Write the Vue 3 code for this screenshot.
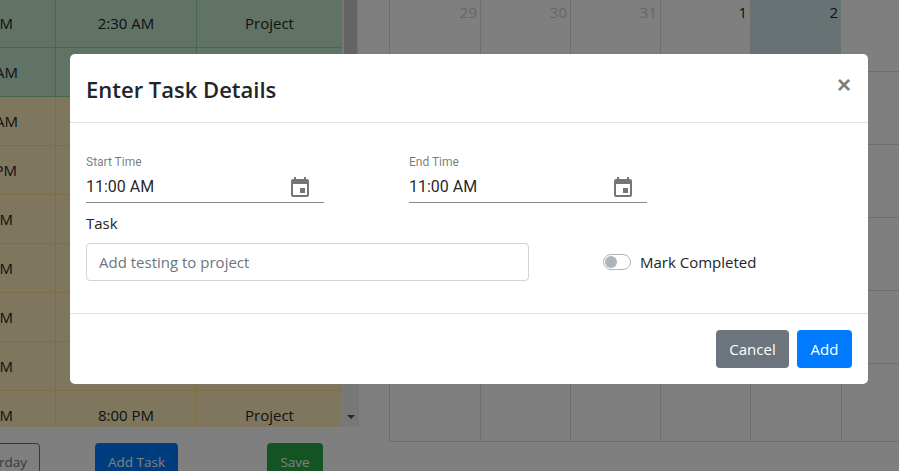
<script setup>
const rows = [
  { t: 'M', s: '2:30 AM', k: 'Project', c: 'green' },
  { t: 'AM', s: '', k: '', c: 'green' },
  { t: 'AM', s: '', k: '', c: 'yellow' },
  { t: 'PM', s: '', k: '', c: 'yellow' },
  { t: 'M', s: '', k: '', c: 'yellow' },
  { t: 'M', s: '', k: '', c: 'yellow' },
  { t: 'M', s: '', k: '', c: 'yellow' },
  { t: 'M', s: '', k: '', c: 'yellow' },
  { t: 'M', s: '8:00 PM', k: 'Project', c: 'yellow' }
]
const weeks = [
  [{ d: '29', m: 1 }, { d: '30', m: 1 }, { d: '31', m: 1 }, { d: '1' }, { d: '2', today: 1 }, { d: '' }],
  ...Array.from({ length: 5 }, () => Array.from({ length: 6 }, () => ({ d: '' })))
]
const iconPath = 'M17 12h-5v5h5v-5zM16 1v2H8V1H6v2H5c-1.11 0-1.99.9-1.99 2L3 19c0 1.1.89 2 2 2h14c1.1 0 2-.9 2-2V5c0-1.1-.9-2-2-2h-1V1h-2zm3 18H5V8h14v11z'
const fields = ['Start Time', 'End Time']
</script>

<template>
  <div class="page">
    <section class="left">
      <div class="scroller">
        <div class="table">
          <div v-for="(r, i) in rows" :key="i" class="row" :class="r.c">
            <div class="cell c1" :class="'t-' + r.t">{{ r.t }}</div>
            <div class="cell c2">{{ r.s }}</div>
            <div class="cell c3">{{ r.k }}</div>
          </div>
        </div>
        <div class="scrollbar">
          <div class="thumb"></div>
          <div class="arrow"></div>
        </div>
      </div>
      <div class="actions">
        <button class="btn outline">rday</button>
        <button class="btn primary dim">Add Task</button>
        <button class="btn success">Save</button>
      </div>
    </section>

    <section class="calendar">
      <div v-for="(w, i) in weeks" :key="i" class="week" :class="'w' + i">
        <div v-for="(c, j) in w" :key="j" class="day" :class="{ muted: c.m, today: c.today }">{{ c.d }}</div>
      </div>
    </section>

    <div class="backdrop"></div>

    <div class="modal">
      <header class="m-head">
        <h5 class="title">Enter Task Details</h5>
        <span class="close">×</span>
      </header>
      <div class="m-body">
        <div class="times">
          <div v-for="f in fields" :key="f" class="tfield">
            <div class="tlabel">{{ f }}</div>
            <div class="tinput">
              <span>11:00 AM</span>
              <svg class="cal" viewBox="0 0 24 24" width="24" height="24"><path :d="iconPath" /></svg>
            </div>
          </div>
        </div>
        <label class="task-label">Task</label>
        <div class="task-row">
          <input class="task-input" placeholder="Add testing to project" />
          <span class="switch"><i></i></span>
          <span class="switch-label">Mark Completed</span>
        </div>
      </div>
      <footer class="m-foot">
        <button class="btn secondary">Cancel</button>
        <button class="btn primary">Add</button>
      </footer>
    </div>
  </div>
</template>

<style>
html, body { margin: 0; overflow: hidden; }
</style>

<style scoped>
.page {
  position: relative;
  width: 899px;
  height: 471px;
  overflow: hidden;
  display: flex;
  background: #fff;
  font-family: "Open Sans", "Noto Sans", sans-serif;
  font-size: 15px;
  color: #212529;
}
.left { width: 359px; flex: none; }
.scroller { display: flex; height: 427px; overflow: hidden; }
.table { width: 342px; flex: none; }
.row {
  display: grid;
  grid-template-columns: 56px 141px 145px;
  height: 49px;
  box-sizing: border-box;
  border-bottom: 1px solid;
}
.row.green { background: #c3e6cb; border-color: #8fd19e; }
.row.yellow { background: #ffeeba; border-color: #ffdf7e; }
.row:first-child { height: 48px; }
.row:first-child .cell { padding-bottom: 1px; }
.cell {
  display: flex;
  align-items: center;
  justify-content: center;
  border-right: 1px solid;
  border-color: inherit;
  font-size: 15px;
}
.cell.c1 { justify-content: flex-end; overflow: hidden; white-space: nowrap; }
.t-M { padding-right: 42px; }
.t-AM { padding-right: 37px; }
.t-PM { padding-right: 38px; }
.cell.c3 { border-right: 0; }
.scrollbar {
  width: 17px;
  background: #f1f1f1;
  display: flex;
  flex-direction: column;
  align-items: center;
  justify-content: space-between;
}
.thumb { width: 13px; height: 200px; background: #c8c8c8; }
.arrow {
  width: 0;
  height: 0;
  border: 4px solid transparent;
  border-top: 4px solid #505050;
  border-bottom: 0;
  margin-bottom: 8px;
}
.actions { display: flex; padding-top: 16px; position: relative; }
.btn {
  height: 38px;
  box-sizing: border-box;
  border: 1px solid transparent;
  border-radius: 4px;
  padding: 0 12px;
  font: inherit;
  font-size: 15px;
  color: #fff;
  flex: none;
}
.actions .btn { font-size: 13.5px; }
.actions .outline { width: 80px; margin-left: -40px; background: transparent; border-color: #6c757d; color: #6c757d; text-align: right; }
.actions .dim { width: 83px; margin-left: 55px; padding: 0; }
.actions .success { width: 56px; margin-left: 89px; padding: 0; background: #28a745; }
.primary { background: #007bff; }
.secondary { background: #6c757d; }

.calendar { margin-left: 30px; width: 510px; flex: none; }
.week {
  display: grid;
  grid-template-columns: 91px 90px 90px 90px 91px 58px;
  height: 73px;
  box-sizing: border-box;
  border-bottom: 1px solid #ddd;
}
.week.w0 { height: 72px; }
.week.w5 { height: 78px; }
.day {
  border-left: 1px solid #ddd;
  text-align: right;
  padding: 1px 3px 0 0;
  line-height: 22px;
  font-size: 15px;
}
.day.muted { color: #ccc; }
.day.today { background: #d1e2e8; }
.week.w0 .day:last-child { border-left: 0; }
.backdrop { position: absolute; inset: 0; background: rgba(0, 0, 0, .5); }

.modal {
  position: absolute;
  left: 70px;
  top: 54px;
  width: 798px;
  height: 330px;
  background: #fff;
  border-radius: 5px;
  display: flex;
  flex-direction: column;
}
.m-head {
  height: 69px;
  box-sizing: border-box;
  flex: none;
  border-bottom: 1px solid #dee2e6;
  display: flex;
  align-items: center;
  justify-content: space-between;
  padding: 1px 16px 0;
}
.title { margin: 0; font-size: 22px; font-weight: 600; color: #212529; }
.close {
  font-family: "Liberation Sans", sans-serif;
  font-size: 24px;
  font-weight: 700;
  color: #000;
  opacity: .5;
  position: relative;
  top: -4px;
  left: -1px;
}
.m-body { height: 190px; flex: none; box-sizing: border-box; padding: 32px 16px 0; }
.times { display: flex; gap: 85px; }
.tfield { width: 238px; font-family: Roboto, sans-serif; }
.tlabel { font-size: 12px; line-height: 14px; color: rgba(0, 0, 0, .54); }
.tinput {
  height: 34px;
  box-sizing: border-box;
  border-bottom: 1px solid #8a8a8a;
  display: flex;
  align-items: center;
  justify-content: space-between;
  font-size: 16px;
  color: rgba(0, 0, 0, .87);
  padding: 2px 12px 0 0;
}
.cal { fill: rgba(0, 0, 0, .54); display: block; position: relative; top: 1px; }
.task-label { display: block; line-height: 24px; margin: 8px 0 8px; font-size: 15px; }
.task-row { display: flex; align-items: center; }
.task-input {
  width: 443px;
  height: 38px;
  box-sizing: border-box;
  border: 1px solid #ced4da;
  border-radius: 4px;
  padding: 0 12px;
  font: inherit;
  font-size: 15px;
  margin-right: 74px;
  outline: 0;
}
.task-input::placeholder { color: #6c757d; opacity: 1; }
.switch {
  width: 28px;
  height: 16px;
  box-sizing: border-box;
  border: 1px solid #adb5bd;
  border-radius: 8px;
  padding: 1px;
  margin-right: 9px;
}
.switch i { display: block; width: 12px; height: 12px; border-radius: 50%; background: #adb5bd; }
.switch-label { font-size: 15px; }
.m-foot {
  flex: 1;
  border-top: 1px solid #dee2e6;
  display: flex;
  justify-content: flex-end;
  gap: 8px;
  padding: 16px;
}
.m-foot .btn { padding: 0; }
.m-foot .secondary { width: 73px; }
.m-foot .primary { width: 55px; }
</style>
